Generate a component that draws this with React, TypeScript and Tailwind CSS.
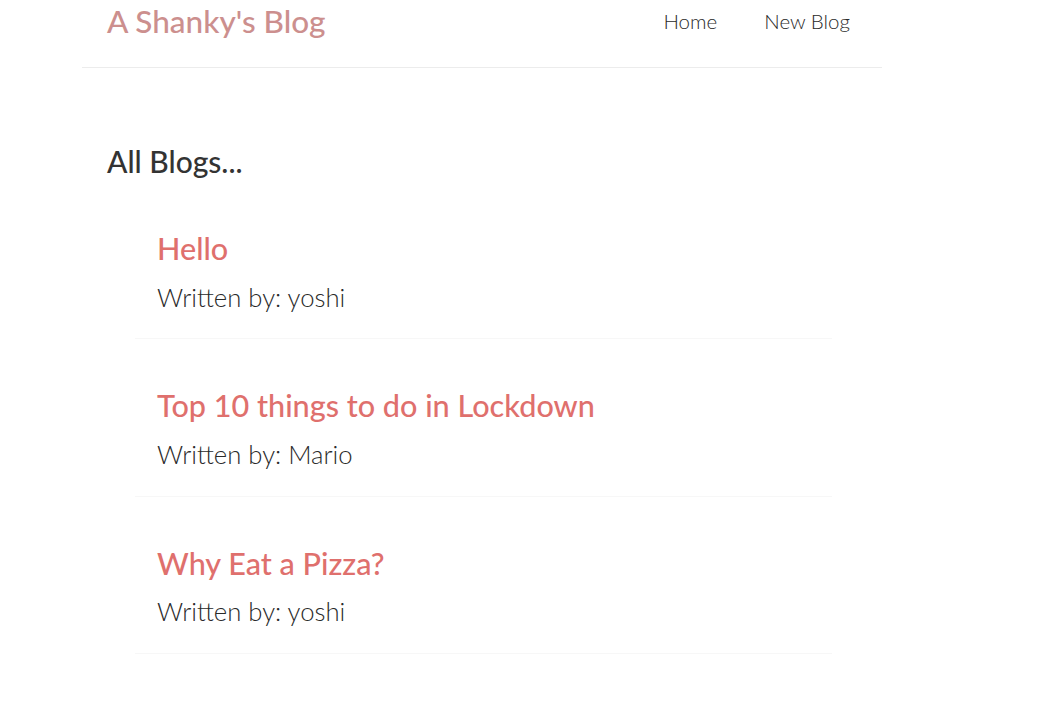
import React from 'react'

const blogs = [
  { id: 1, title: 'Hello', author: 'yoshi' },
  { id: 2, title: 'Top 10 things to do in Lockdown', author: 'Mario' },
  { id: 3, title: 'Why Eat a Pizza?', author: 'yoshi' },
]

export default function App() {
  return (
    <div className="min-h-screen bg-white font-['Lato',sans-serif] text-[#333]">
      <nav className="ml-[82px] w-[800px] h-[68px] flex items-center justify-between pl-[25px] pr-[24px] border-b border-[#ececec] pb-[24px]">
        <h1 className="text-[31.5px] font-medium text-[#cc8f8e] leading-none">A Shanky's Blog</h1>
        <div className="flex items-center gap-[31px] text-[20.5px] font-light text-[#2a2a2a] leading-none">
          <a className="px-2 py-1">Home</a>
          <a className="px-2 py-1">New Blog</a>
        </div>
      </nav>

      <main className="ml-[82px] w-[800px] pl-[25px] pt-[78px]">
        <h2 className="text-[30px] font-medium leading-none">All Blogs...</h2>
        <div className="mt-[40px] ml-[28px] w-[697px]">
          {blogs.map((blog) => (
            <div key={blog.id} className="pl-[22px] pt-[18px] pb-[28px] mb-[34px] border-b border-[#f7f7f7]">
              <h2 className="text-[30.6px] font-medium text-[#df706d] leading-none">{blog.title}</h2>
              <p className="mt-[20px] text-[25.7px] font-light text-[#2a2a2a] leading-none">Written by: {blog.author}</p>
            </div>
          ))}
        </div>
      </main>
    </div>
  )
}
